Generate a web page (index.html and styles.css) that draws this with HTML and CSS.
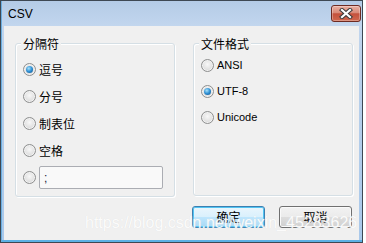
FILE: index.html
```html
<!DOCTYPE html>
<html lang="zh-CN">
<head>
<meta charset="utf-8">
<title>CSV</title>
<link rel="stylesheet" href="styles.css">
</head>
<body>
<div class="window">
  <div class="titlebar">
    <span class="title">CSV</span>
    <span class="close">
      <svg width="14" height="11" viewBox="0 0 14 11" aria-hidden="true">
        <path d="M3 2 L11 9 M11 2 L3 9" stroke="#3a3a3a" stroke-width="4.2" stroke-linecap="square" fill="none"/>
        <path d="M3 2 L11 9 M11 2 L3 9" stroke="#ffffff" stroke-width="2.2" stroke-linecap="square" fill="none"/>
      </svg>
    </span>
  </div>
  <div class="client">
    <div class="groups">
      <div class="group group-left">
        <span class="legend">分隔符</span>
        <div class="options options-left">
          <div class="opt"><span class="radio on"></span><span class="zh">逗号</span></div>
          <div class="opt"><span class="radio"></span><span class="zh">分号</span></div>
          <div class="opt"><span class="radio"></span><span class="zh">制表位</span></div>
          <div class="opt"><span class="radio"></span><span class="zh">空格</span></div>
          <div class="opt"><span class="radio"></span><span class="field">;</span></div>
        </div>
      </div>
      <div class="group group-right">
        <span class="legend">文件格式</span>
        <div class="options options-right">
          <div class="opt"><span class="radio"></span><span class="en">ANSI</span></div>
          <div class="opt"><span class="radio on"></span><span class="en">UTF-8</span></div>
          <div class="opt"><span class="radio"></span><span class="en">Unicode</span></div>
        </div>
      </div>
    </div>
    <div class="actions">
      <span class="btn btn-default">确定</span>
      <span class="btn">取消</span>
    </div>
  </div>
  <div class="watermark">https://blog.csdn.net/weixin_45283626</div>
</div>
</body>
</html>
```

FILE: styles.css
```css
html, body {
  margin: 0;
  padding: 0;
}
body {
  width: 366px;
  height: 243px;
  overflow: hidden;
  background: #ffffff;
  font-family: "Liberation Sans", "Noto Sans CJK SC", sans-serif;
}
.window {
  position: relative;
  box-sizing: border-box;
  width: 363px;
  height: 243px;
  border: 1px solid #3e4853;
  background: linear-gradient(#b4cbe6, #c2d6ee 25px, #b9d0ea 60px, #a9c8ea);
  padding: 0 0 2px 0;
  display: flex;
  flex-direction: column;
  box-shadow: inset 1px 0 0 #6aaee0, inset 0 -2px 0 #5cb0e4;
}
.titlebar {
  height: 25px;
  flex: none;
  display: flex;
  align-items: center;
  padding-left: 7px;
}
.title {
  font: 12px "Liberation Sans", sans-serif;
  color: #000000;
}
.close {
  align-self: flex-start;
  margin: 4px 1px 0 auto;
  width: 30px;
  height: 17px;
  box-sizing: border-box;
  border: 1px solid #6e2b22;
  border-radius: 3px;
  background: linear-gradient(#eab0a2, #d98a78 45%, #c4513c 52%, #d0684f);
  box-shadow: inset 0 0 0 1px rgba(255, 255, 255, 0.3);
  display: flex;
  align-items: center;
  justify-content: center;
}
.close svg {
  display: block;
}
.client {
  flex: 1;
  margin: 0 3px;
  background: #f0f0f0;
  padding: 17px 0 0 11px;
  box-sizing: border-box;
}
.groups {
  display: flex;
  gap: 18px;
  align-items: flex-start;
}
.group {
  position: relative;
  box-sizing: border-box;
  width: 160px;
  border: 1px solid #d5dfe5;
  border-radius: 3px;
  box-shadow: inset 1px 1px 0 #ffffff, 1px 1px 0 #ffffff;
}
.group-left {
  height: 154px;
}
.group-right {
  height: 153px;
}
.legend {
  position: absolute;
  left: 5px;
  top: -8px;
  padding: 0 2px;
  background: #f0f0f0;
  font: 12px/16px "Noto Sans CJK SC", sans-serif;
  color: #000000;
}
.options {
  display: flex;
  flex-direction: column;
}
.options-left {
  padding-top: 12px;
}
.options-left .opt {
  height: 27px;
}
.options-right {
  padding-top: 8px;
}
.options-right .opt {
  height: 26px;
}
.opt {
  display: flex;
  align-items: center;
  gap: 3px;
  padding-left: 7px;
}
.radio {
  position: relative;
  flex: none;
  width: 13px;
  height: 13px;
  box-sizing: border-box;
  border-radius: 50%;
  border: 1px solid #8e8f8f;
  background: radial-gradient(circle at 50% 40%, #f8f8f8, #e2e2e2 55%, #cacaca);
  box-shadow: inset 0 0 0 1px #f2f2f2;
}
.radio.on::after {
  content: "";
  position: absolute;
  left: 2px;
  top: 2px;
  width: 7px;
  height: 7px;
  border-radius: 50%;
  background: radial-gradient(circle at 40% 35%, #a8e2fb, #2e8fd3 50%, #0b4c86);
}
.zh {
  font: 12px/14px "Noto Sans CJK SC", sans-serif;
  color: #000000;
}
.en {
  font: 11px/14px "Liberation Sans", sans-serif;
  color: #000000;
}
.field {
  width: 124px;
  height: 23px;
  box-sizing: border-box;
  border: 1px solid #abadb3;
  border-radius: 2px;
  background: #f9f9f9;
  font: 12px "Liberation Sans", sans-serif;
  color: #1a1a40;
  padding-left: 4px;
  display: flex;
  align-items: center;
}
.actions {
  display: flex;
  gap: 14px;
  margin: 9px 0 0 177px;
}
.btn {
  width: 73px;
  height: 22px;
  box-sizing: border-box;
  border: 1px solid #707070;
  border-radius: 3px;
  background: linear-gradient(#f2f2f2, #ebebeb 50%, #dddddd 50%, #cfcfcf);
  box-shadow: inset 0 0 0 1px #fafafa;
  display: flex;
  align-items: center;
  justify-content: center;
  font: 12px/14px "Noto Sans CJK SC", sans-serif;
  color: #000000;
}
.btn-default {
  border-color: #3c7fb1;
  background: linear-gradient(#eaf6fd, #d9f0fc 50%, #bee6fd 50%, #a7d9f5);
  box-shadow: inset 0 0 0 1px #52c4f2;
}
.watermark {
  position: absolute;
  left: 84px;
  top: 213px;
  font: 16px/18px "Liberation Sans", sans-serif;
  color: rgba(255, 255, 255, 0.92);
  text-shadow: 0 0 1px rgba(0, 0, 0, 0.12), 0 0 2px rgba(255, 255, 255, 0.6);
  white-space: nowrap;
}
```
